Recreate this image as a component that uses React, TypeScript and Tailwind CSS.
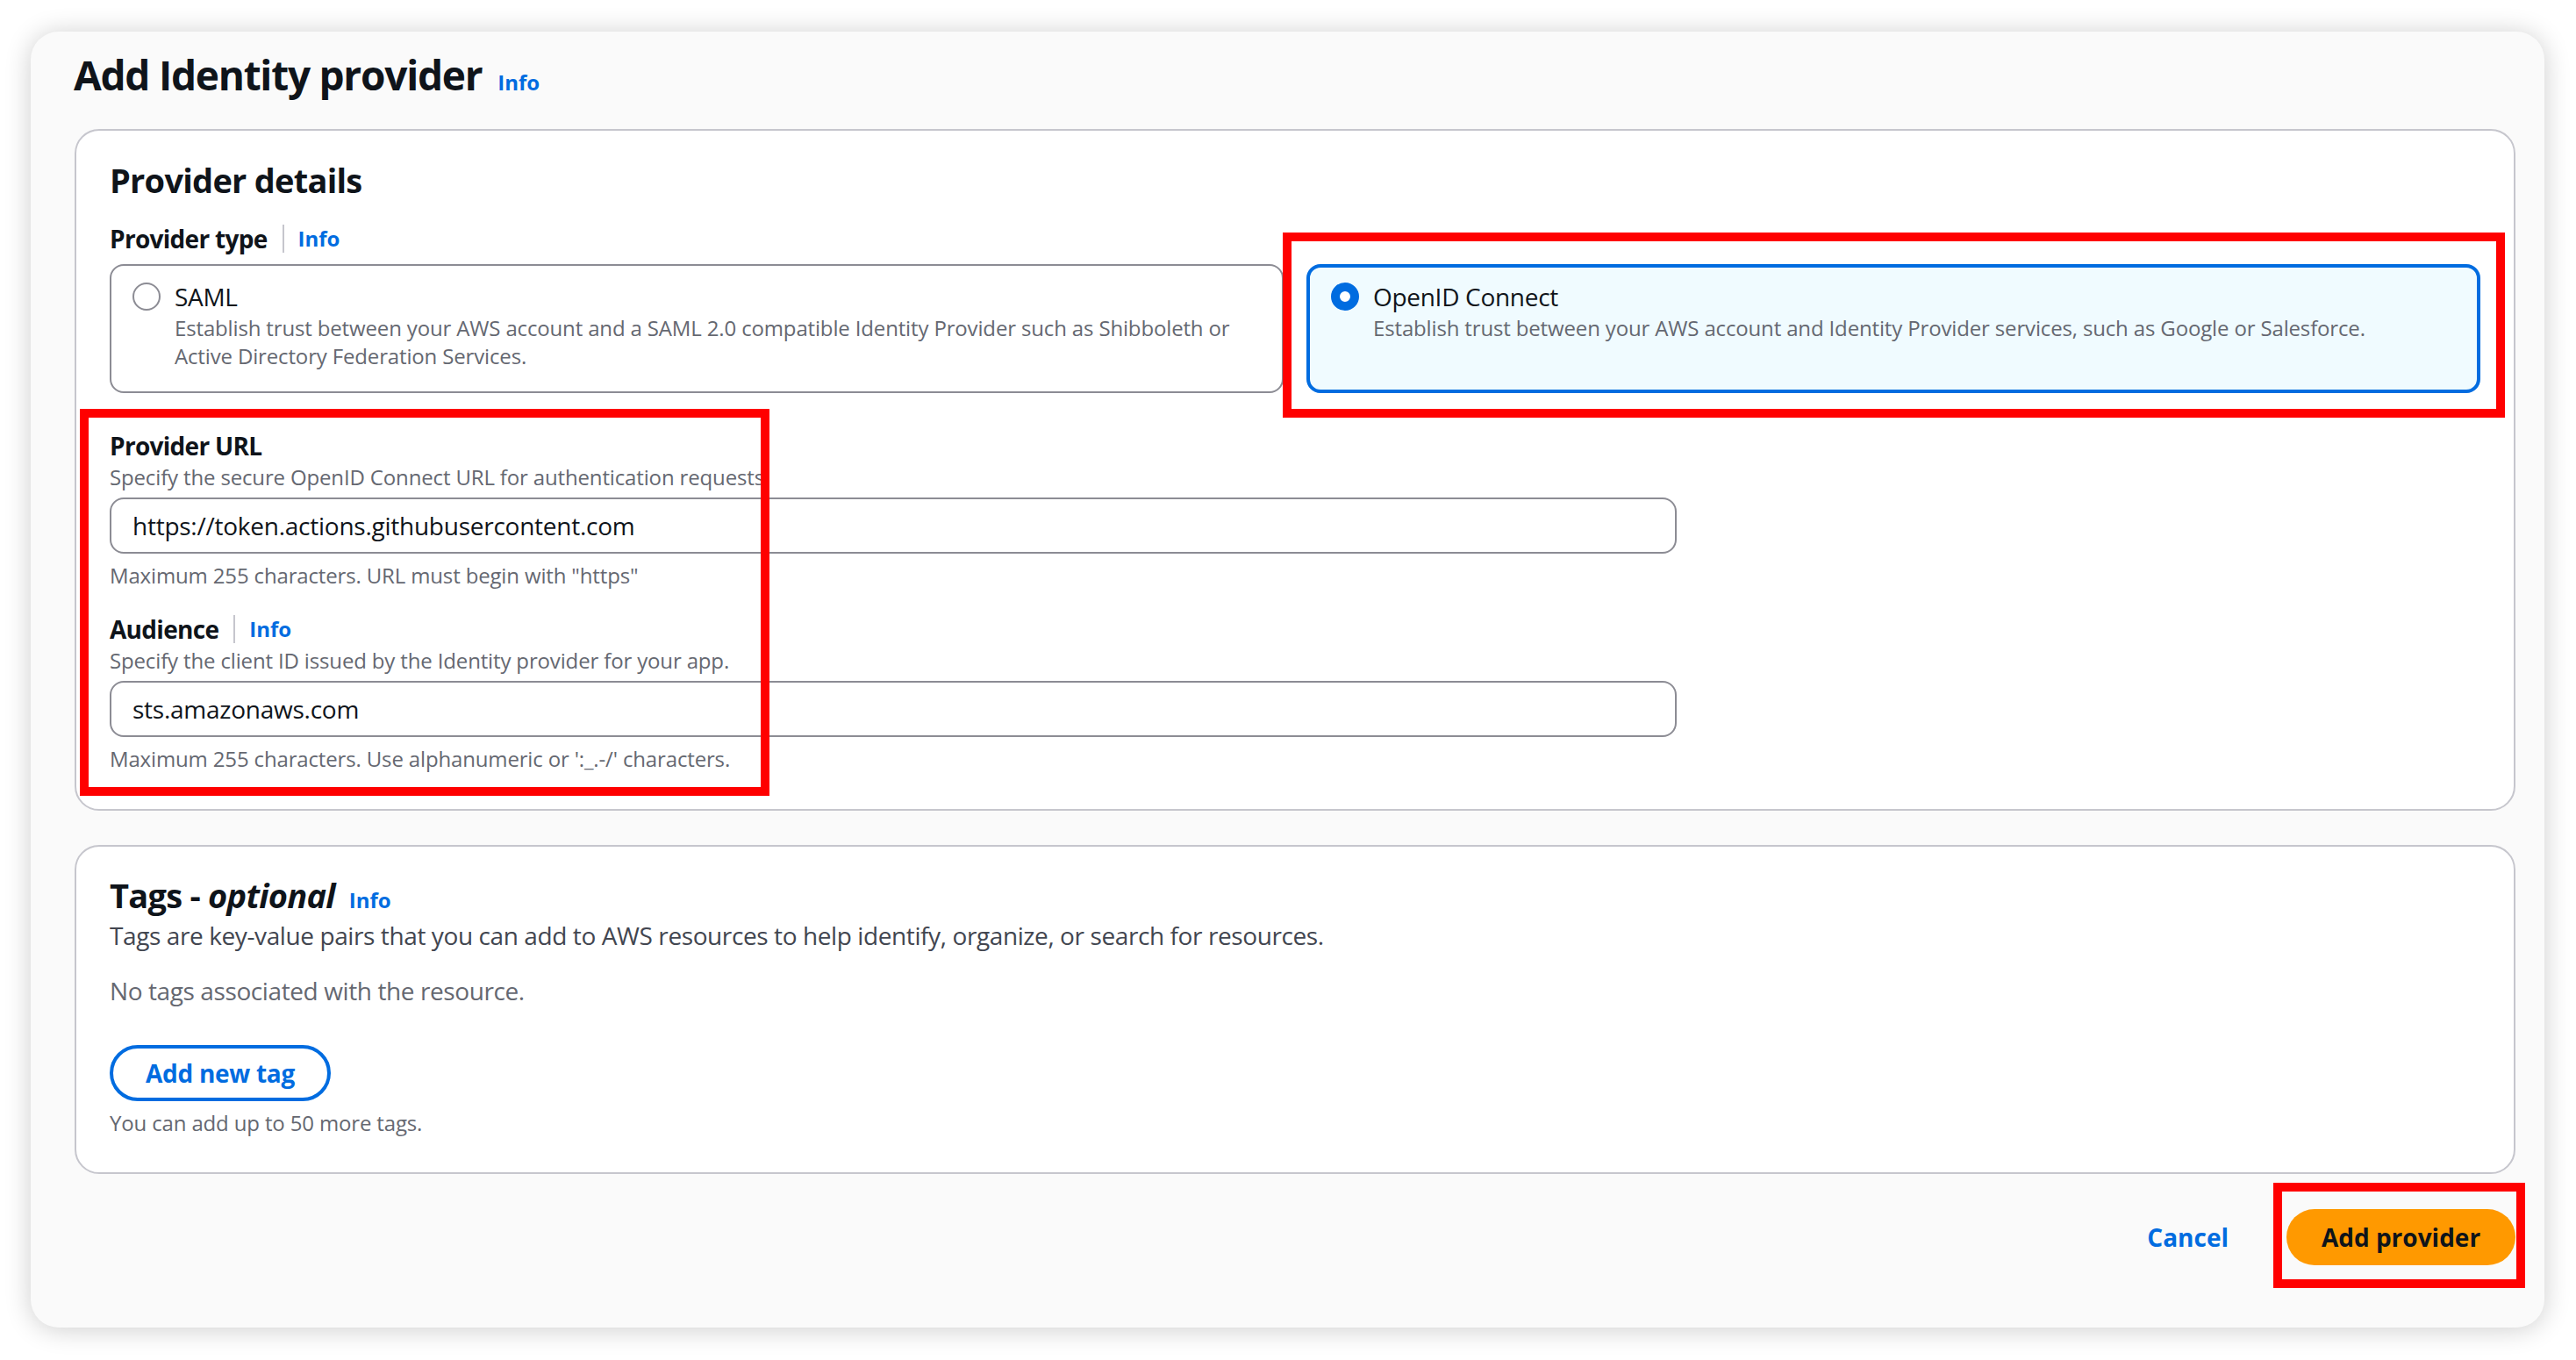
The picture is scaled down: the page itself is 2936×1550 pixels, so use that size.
import { type ReactNode } from "react";

const font = { fontFamily: '"Open Sans", "Noto Sans", sans-serif' };

function InfoLink({ className = "" }: { className?: string }) {
  return <span className={`text-[24px] font-bold leading-[32px] text-[#006ce0] ${className}`}>Info</span>;
}

function LabelWithInfo({ label }: { label: string }) {
  return (
    <div className="flex h-[40px] items-center">
      <span className="border-r-2 border-[#c6c6cd] pr-[17px] text-[28px] font-bold leading-[32px] tracking-[-0.7px] text-[#0f141a]">
        {label}
      </span>
      <InfoLink className="pl-[16px]" />
    </div>
  );
}

function RadioTile({
  title,
  description,
  selected = false
}: {
  title: string;
  description: ReactNode;
  selected?: boolean;
}) {
  return (
    <div
      className={`rounded-[16px] px-[24px] ${
        selected ? "border-[4px] border-[#006ce0] bg-[#f0fbff] pt-[13px] pb-[24px]" : "border-2 border-[#8c8c94] bg-white pt-[15px] pb-[24px]"
      }`}
    >
      <div className="flex items-start gap-[16px]">
        <span
          className={`mt-[4px] h-[32px] w-[32px] shrink-0 rounded-full ${
            selected ? "border-[10px] border-[#006ce0] bg-white" : "border-2 border-[#8c8c94] bg-white"
          }`}
        />
        <div className="min-w-0">
          <div className="text-[28px] leading-[40px] tracking-[-0.3px] text-[#0f141a]">{title}</div>
          <div className="text-[24px] leading-[32px] tracking-[-0.15px] text-[#656871]">{description}</div>
        </div>
      </div>
    </div>
  );
}

function TextField({
  label,
  description,
  value,
  constraint,
  info = false
}: {
  label: string;
  description: string;
  value: string;
  constraint: string;
  info?: boolean;
}) {
  return (
    <div>
      {info ? (
        <LabelWithInfo label={label} />
      ) : (
        <div className="text-[28px] font-bold leading-[40px] tracking-[-0.7px] text-[#0f141a]">{label}</div>
      )}
      <div className="text-[24px] leading-[32px] tracking-[-0.15px] text-[#656871]">{description}</div>
      <div className="mt-[7px] flex h-[64px] w-[1786px] items-center rounded-[16px] border-2 border-[#8c8c94] bg-white px-[24px]">
        <span className="text-[28px] leading-[40px] tracking-[-0.25px] text-[#0f141a]">{value}</span>
      </div>
      <div className="mt-[9px] text-[24px] leading-[32px] tracking-[-0.15px] text-[#656871]">{constraint}</div>
    </div>
  );
}

function RedBox({ className }: { className: string }) {
  return <div className={`pointer-events-none absolute border-[10px] border-[#ff0000] ${className}`} />;
}

export default function App() {
  return (
    <div className="relative h-[1550px] w-full overflow-hidden bg-white pt-[36px] pl-[35px]" style={font}>
      <div className="h-[1477px] w-[2865px] rounded-[32px] bg-[#fafafa] pr-[33px] pl-[50px] shadow-[0_2px_30px_rgba(0,0,0,0.2)]">
        <div className="flex items-baseline pt-[19px]">
          <h1 className="ml-[-1px] text-[46px] font-bold leading-[60px] tracking-[-1.25px] text-[#0f141a]">Add Identity provider</h1>
          <InfoLink className="ml-[18px]" />
        </div>

        <section className="mt-[32px] rounded-[28px] border-2 border-[#c6c6cd] bg-white px-[38px] pt-[32px] pb-[41px]">
          <h2 className="text-[38px] font-bold leading-[48px] tracking-[-0.75px] text-[#0f141a]">Provider details</h2>

          <div className="mt-[23px]">
            <LabelWithInfo label="Provider type" />
          </div>
          <div className="mt-[9px] grid grid-cols-2 gap-[26px]">
            <RadioTile
              title="SAML"
              description={
                <>
                  Establish trust between your AWS account and a SAML 2.0 compatible Identity Provider such as Shibboleth or
                  <br />
                  Active Directory Federation Services.
                </>
              }
            />
            <RadioTile
              selected
              title="OpenID Connect"
              description="Establish trust between your AWS account and Identity Provider services, such as Google or Salesforce."
            />
          </div>

          <div className="mt-[40px]">
            <TextField
              label="Provider URL"
              description="Specify the secure OpenID Connect URL for authentication requests"
              value="https://token.actions.githubusercontent.com"
              constraint={'Maximum 255 characters. URL must begin with "https"'}
            />
          </div>
          <div className="mt-[25px]">
            <TextField
              info
              label="Audience"
              description="Specify the client ID issued by the Identity provider for your app."
              value="sts.amazonaws.com"
              constraint="Maximum 255 characters. Use alphanumeric or ':_.-/' characters."
            />
          </div>
        </section>

        <section className="mt-[39px] rounded-[28px] border-2 border-[#c6c6cd] bg-white px-[38px] pt-[31px] pb-[40px]">
          <div className="flex items-baseline">
            <h2 className="text-[38px] font-bold leading-[48px] tracking-[-0.75px] text-[#0f141a]">
              Tags - <i className="font-bold">optional</i>
            </h2>
            <InfoLink className="ml-[16px]" />
          </div>
          <p className="mt-[2px] text-[28px] leading-[40px] tracking-[-0.4px] text-[#424650]">
            Tags are key-value pairs that you can add to AWS resources to help identify, organize, or search for resources.
          </p>
          <p className="mt-[23px] text-[28px] leading-[40px] tracking-[-0.4px] text-[#656871]">No tags associated with the resource.</p>
          <button
            type="button"
            className="mt-[42px] flex h-[64px] w-[252px] items-center justify-center rounded-full border-[4px] border-[#006ce0] bg-white text-[28px] font-bold tracking-[-0.3px] text-[#006ce0]"
          >
            Add new tag
          </button>
          <p className="mt-[9px] text-[24px] leading-[32px] tracking-[-0.15px] text-[#656871]">You can add up to 50 more tags.</p>
        </section>

        <div className="mt-[40px] flex items-center justify-end">
          <span className="mr-[66px] text-[28px] font-bold leading-[40px] text-[#006ce0]">Cancel</span>
          <button
            type="button"
            className="flex h-[64px] w-[261px] items-center justify-center rounded-full bg-[#ff9900] text-[28px] font-bold text-[#0f141a]"
          >
            Add provider
          </button>
        </div>
      </div>

      <RedBox className="top-[265px] left-[1462px] h-[211px] w-[1393px]" />
      <RedBox className="top-[466px] left-[91px] h-[441px] w-[786px]" />
      <RedBox className="top-[1348px] left-[2591px] h-[120px] w-[287px]" />
    </div>
  );
}
